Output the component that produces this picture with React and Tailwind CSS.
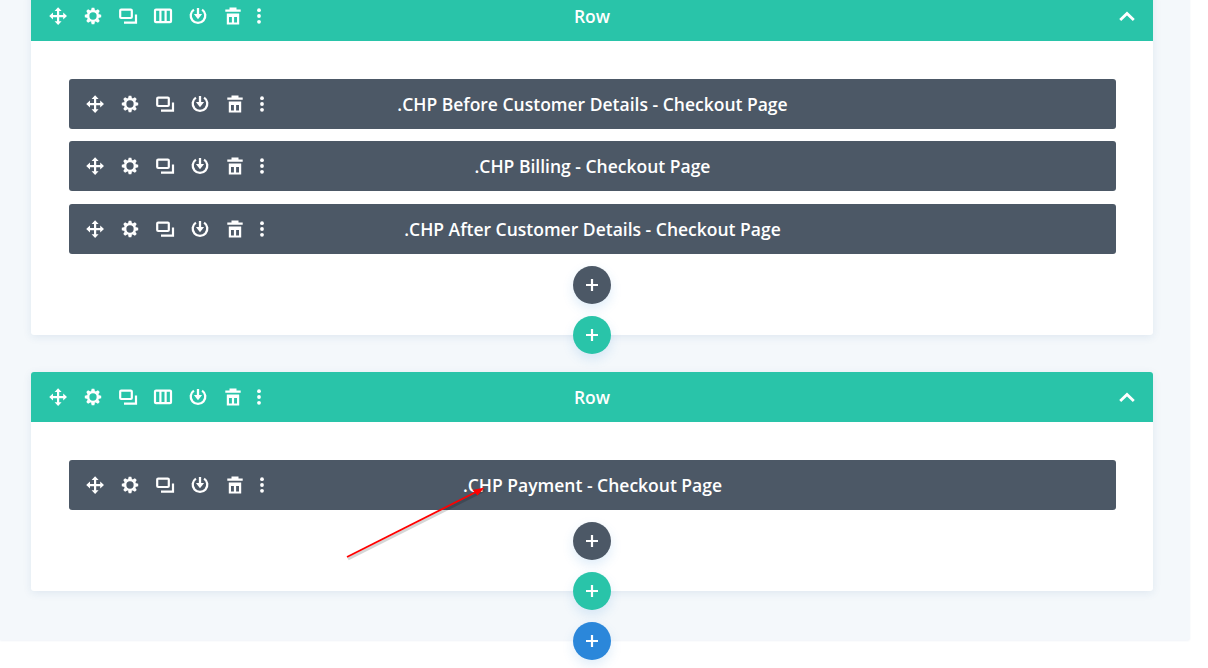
import React from "react";

// toolbar icons, all on a 20 box
const MoveIcon = () => (
  <svg width="20" height="20" viewBox="0 0 20 20" fill="white">
    <path d="M9 4h2.2v5h5v2.2h-5v5H9v-5H4V9h5z" />
    <path d="M10.1 1.2 13.6 5H6.6zM10.1 19 6.6 15.2h7zM1.2 10.1 5 6.6v7zM19 10.1 15.2 13.6v-7z" />
  </svg>
);

const GearIcon = () => (
  <svg width="20" height="20" viewBox="0 0 20 20" fill="white">
    <circle cx="10" cy="10" r="4.9" fill="none" stroke="white" strokeWidth="2.5" />
    {[0, 45, 90, 135, 180, 225, 270, 315].map((angle) => (
      <path key={angle} d="M8 4.6 8.7 1.8h2.6l.7 2.8z" transform={`rotate(${angle} 10 10)`} />
    ))}
  </svg>
);

const CloneIcon = () => (
  <svg width="20" height="20" viewBox="0 0 20 20" fill="none" stroke="white" strokeWidth="2.2">
    <rect x="2.2" y="3.6" width="11.6" height="8.4" rx="1" />
    <path d="M6 16.6h12V8.5" />
  </svg>
);

const ColumnsIcon = () => (
  <svg width="20" height="20" viewBox="0 0 20 20" fill="none" stroke="white" strokeWidth="2.2">
    <rect x="2" y="3.6" width="16" height="12.6" rx="1" />
    <path d="M7.4 3.6v12.6M12.6 3.6v12.6" />
  </svg>
);

const SaveIcon = () => (
  <svg width="20" height="20" viewBox="0 0 20 20" fill="none" stroke="white" strokeWidth="2.3">
    <path d="M5.9 3.6a7.3 7.3 0 1 0 8.2 0" />
    <path d="M10 2v7" />
    <path d="M5.9 8 10 13.2 14.1 8z" fill="white" stroke="none" />
  </svg>
);

const TrashIcon = () => (
  <svg width="20" height="20" viewBox="0 0 20 20" fill="white">
    <path d="M6.5 1.4h7v2.2h4.2v2.2H2.3V3.6h4.2z" />
    <path fillRule="evenodd" d="M3.8 7.4h12.4v11.2H3.8zM6 11v5.4h2.9V11zm5.1 0v5.4H14V11z" />
  </svg>
);

const DotsIcon = () => (
  <svg width="20" height="20" viewBox="0 0 20 20" fill="white">
    <circle cx="10" cy="4.2" r="1.9" />
    <circle cx="10" cy="10" r="1.9" />
    <circle cx="10" cy="15.8" r="1.9" />
  </svg>
);

const ToolButton = ({ children }) => (
  <span className="flex w-[35px] justify-center">{children}</span>
);

function AddButton({ color }) {
  return (
    <button
      className={`relative z-10 flex h-[38px] w-[38px] items-center justify-center rounded-full ${color} shadow-[0_5px_12px_rgba(43,135,218,0.15)]`}
    >
      <svg width="14" height="14" viewBox="0 0 14 14" stroke="white" strokeWidth="2.2">
        <path d="M7 1v12M1 7h12" />
      </svg>
    </button>
  );
}

function Module({ title }) {
  return (
    <div className="grid h-[50px] grid-cols-[1fr_auto_1fr] items-center rounded-[3px] bg-[#4c5866] pl-[8px]">
      <div className="flex items-center">
        <ToolButton><MoveIcon /></ToolButton>
        <ToolButton><GearIcon /></ToolButton>
        <ToolButton><CloneIcon /></ToolButton>
        <ToolButton><SaveIcon /></ToolButton>
        <ToolButton><TrashIcon /></ToolButton>
        <span className="flex w-[20px] justify-center"><DotsIcon /></span>
      </div>
      <span className="-ml-[8px] text-[17.5px] font-semibold text-white">{title}</span>
      <span />
    </div>
  );
}

function Row({ modules, className = "" }) {
  return (
    <div className={`w-[1122px] rounded-[3px] bg-white shadow-[0_2px_8px_rgba(43,87,151,0.1)] ${className}`}>
      <div className="grid h-[50px] grid-cols-[1fr_auto_1fr] items-center rounded-t-[3px] bg-[#29c4a9] px-[9px]">
        <div className="flex items-center">
          <ToolButton><MoveIcon /></ToolButton>
          <ToolButton><GearIcon /></ToolButton>
          <ToolButton><CloneIcon /></ToolButton>
          <ToolButton><ColumnsIcon /></ToolButton>
          <ToolButton><SaveIcon /></ToolButton>
          <ToolButton><TrashIcon /></ToolButton>
          <span className="-ml-[1px] flex w-[20px] justify-center"><DotsIcon /></span>
        </div>
        <span className="text-[17.5px] font-semibold text-white">Row</span>
        <div className="flex justify-end pr-[8px]">
          <svg width="18" height="12" viewBox="0 0 18 12" fill="none" stroke="white" strokeWidth="2.8">
            <path d="M2.2 10 9 3.4l6.8 6.6" />
          </svg>
        </div>
      </div>
      <div className="flex flex-col pl-[38px] pr-[37px] pt-[38px]">
        <div className="flex flex-col gap-[12.4px]">
          {modules.map((title) => (
            <Module key={title} title={title} />
          ))}
        </div>
        <div className="-mb-[19px] mr-[1px] mt-[12.2px] flex flex-col items-center gap-[12px]">
          <AddButton color="bg-[#4c5866]" />
          <AddButton color="bg-[#29c4a9]" />
        </div>
      </div>
    </div>
  );
}

export default function App() {
  return (
    <div className="relative h-[668px] w-[1208px] overflow-hidden bg-white font-['Open_Sans',sans-serif]">
      <div className="-mt-[9px] h-[649px] w-[1190px] rounded-br-[3px] bg-[#f4f8fb] pl-[31px] shadow-[0_1px_2px_rgba(43,87,151,0.07)]">
        <Row
          modules={[
            ".CHP Before Customer Details - Checkout Page",
            ".CHP Billing - Checkout Page",
            ".CHP After Customer Details - Checkout Page",
          ]}
        />
        <Row className="mt-[37px]" modules={[".CHP Payment - Checkout Page"]} />
        <div className="mt-[31px] flex w-[1122px] justify-center">
          <AddButton color="bg-[#2b87da]" />
        </div>
      </div>

      {/* red annotation arrow drawn over the page */}
      <svg className="absolute left-0 top-0" width="1208" height="668" fill="none">
        <path d="M348 559 485 490" stroke="rgba(0,0,0,0.16)" strokeWidth="3" />
        <path d="M347 557 478 491" stroke="#ff0000" strokeWidth="1.8" />
        <path d="M484.5 487.5 472.5 490 477.5 495.5z" fill="#ff0000" />
      </svg>
    </div>
  );
}
